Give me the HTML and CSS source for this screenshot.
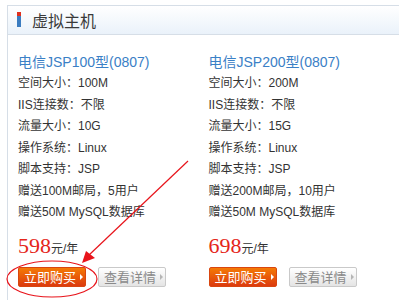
FILE: index.html
```html
<!DOCTYPE html>
<html lang="zh-CN">
<head>
  <meta charset="UTF-8" />
  <title>虚拟主机</title>
  <link rel="stylesheet" href="styles.css">
</head>
<body>
  <div class="panel">
    <div class="panel-hd">
      <span class="mark"></span>
      <h2>虚拟主机</h2>
    </div>
    <div class="panel-bd">
      <div class="product">
        <h3>电信JSP100型(0807)</h3>
        <ul class="specs">
          <li>空间大小：100M</li>
          <li>IIS连接数：不限</li>
          <li>流量大小：10G</li>
          <li>操作系统：Linux</li>
          <li>脚本支持：JSP</li>
          <li>赠送100M邮局，5用户</li>
          <li>赠送50M MySQL数据库</li>
        </ul>
        <div class="price"><em>598</em>元/年</div>
        <div class="actions">
          <a class="btn btn-buy" href="#">立即购买<i></i></a>
          <a class="btn btn-more" href="#">查看详情<i></i></a>
        </div>
      </div>
      <div class="product">
        <h3>电信JSP200型(0807)</h3>
        <ul class="specs">
          <li>空间大小：200M</li>
          <li>IIS连接数：不限</li>
          <li>流量大小：15G</li>
          <li>操作系统：Linux</li>
          <li>脚本支持：JSP</li>
          <li>赠送200M邮局，10用户</li>
          <li>赠送50M MySQL数据库</li>
        </ul>
        <div class="price"><em>698</em>元/年</div>
        <div class="actions">
          <a class="btn btn-buy" href="#">立即购买<i></i></a>
          <a class="btn btn-more" href="#">查看详情<i></i></a>
        </div>
      </div>
    </div>
  </div>

  <!-- red annotation drawn over the page -->
  <svg class="note" width="399" height="300" viewBox="0 0 399 300">
    <line x1="188" y1="161" x2="89" y2="255" stroke="#e8141b" stroke-width="1.2" />
    <polygon points="82,263 86,251 95,258" fill="#e8141b" />
    <ellipse cx="52" cy="279" rx="45" ry="18" fill="none" stroke="#e8141b" stroke-width="1.2" />
  </svg>
</body>
</html>
```

FILE: styles.css
```css
body {
  margin: 0;
  background: #fff;
  font-family: 'Liberation Sans', 'Noto Sans CJK SC', sans-serif;
  color: #333;
  position: relative;
  height: 300px;
  overflow: hidden;
}

.panel {
  margin: 5px 0 0 7px;
}

.panel-hd {
  display: flex;
  align-items: center;
  height: 28px;
  padding-left: 9px;
  border: 1px solid #d6dee7;
  border-right: none;
  background: linear-gradient(to bottom, #ffffff, #eaf2fa);
}

.mark {
  width: 4px;
  height: 15px;
  margin-top: -1px;
  background: linear-gradient(to bottom, #e0301e 0, #e0301e 4px, #3b7cc0 4px);
}

.panel-hd h2 {
  margin: 0 0 0 11px;
  font-size: 16px;
  font-weight: normal;
  color: #3a3a3a;
}

.panel-bd {
  display: flex;
  border-left: 1px solid #d6dee7;
  padding: 16px 0 20px 10px;
}

.product {
  width: 193px;
}

.product h3 {
  margin: 0;
  font-size: 14px;
  line-height: 22px;
  font-weight: normal;
  color: #3a80c6;
}

.specs {
  list-style: none;
  margin: 0;
  padding: 0;
  font-size: 12px;
  line-height: 21.5px;
}

.price {
  margin-top: 7px;
  height: 30px;
  line-height: 30px;
  font-size: 12px;
}

.price em {
  font-style: normal;
  font-family: 'Liberation Serif', serif;
  font-size: 22px;
  color: #e5261a;
}

.actions {
  display: flex;
  gap: 12px;
  margin-top: 6px;
}

.btn {
  display: flex;
  align-items: center;
  box-sizing: border-box;
  width: 68px;
  height: 20px;
  padding-left: 5px;
  border-radius: 2px;
  font-size: 13px;
  white-space: nowrap;
  text-decoration: none;
}

.btn i {
  flex: none;
  width: 0;
  height: 0;
  margin-left: 4px;
  border-top: 3px solid transparent;
  border-bottom: 3px solid transparent;
  border-left: 3px solid #fff;
}

.btn-buy {
  color: #fff;
  background: linear-gradient(to bottom, #f47a06, #dc3a0e);
  border: 1px solid #d9460f;
}

.btn-more {
  color: #8a8a8a;
  background: linear-gradient(to bottom, #ffffff, #e4e4e4);
  border: 1px solid #c9c9c9;
}

.btn-more i {
  border-left-color: #b5b5b5;
}

.note {
  position: absolute;
  left: 0;
  top: 0;
  pointer-events: none;
}
```
